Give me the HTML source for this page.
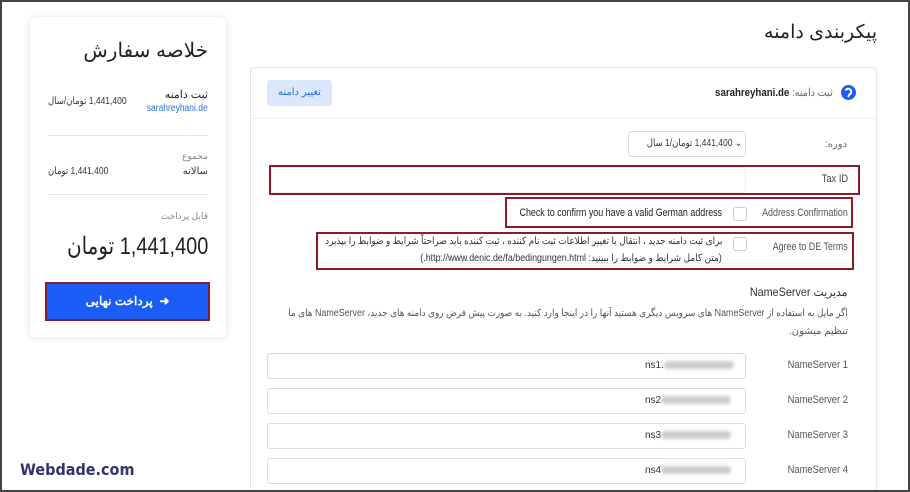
<!DOCTYPE html>
<html><head><meta charset="utf-8"><style>
*{margin:0;padding:0;box-sizing:border-box}
html,body{width:910px;height:492px;overflow:hidden}
body{background:#fff;position:relative;font-family:"Liberation Sans","Noto Sans CJK SC",sans-serif;color:#333}
.frame{position:absolute;left:0;top:0;width:910px;height:492px;border:2px solid #444;z-index:10;pointer-events:none}
.a{position:absolute;white-space:nowrap}
.R{transform-origin:right center}
.L{transform-origin:left center}
.r{direction:rtl}
.card{position:absolute;left:30px;top:17px;width:196px;height:320px;background:#fff;border-radius:4px;box-shadow:0 1px 8px rgba(0,0,0,.12)}
.hr{position:absolute;height:1px;background:#e8e8e8}
.panel{position:absolute;left:250px;top:67px;width:627px;height:440px;border:1px solid #e6e6e6;border-radius:4px;background:#fff}
.inp{position:absolute;background:#fff;border:1px solid #ddd;border-radius:3px}
.red{position:absolute;border:2px solid #8b1c2c}
.cb{position:absolute;width:14px;height:14px;border:1px solid #ccc;border-radius:3px;background:#fff}
.blur{display:inline-block;width:70px;height:8px;background:#ccc;border-radius:4px;filter:blur(1.5px);vertical-align:middle}
</style></head><body>
<div class="card"></div>
<div class="a r" style="right:702px;top:38px;font-size:20px;color:#222">خلاصه سفارش</div>
<div class="a r" style="right:702px;top:88px;font-size:11px;color:#222">ثبت دامنه</div>
<div class="a R" style="right:702px;top:103px;font-size:10px;color:#2a6fdb;transform:scaleX(.85)">sarahreyhani.de</div>
<div class="a r L" style="left:48px;top:96px;font-size:10px;color:#333;transform:scaleX(.85)">1,441,400 تومان/سال</div>
<div class="hr" style="left:48px;top:135px;width:160px"></div>
<div class="a r" style="right:702px;top:151px;font-size:9px;color:#888">مجموع</div>
<div class="a r" style="right:702px;top:166px;font-size:10px;color:#333">سالانه</div>
<div class="a r L" style="left:48px;top:166px;font-size:10px;color:#333;transform:scaleX(.85)">1,441,400 تومان</div>
<div class="hr" style="left:48px;top:194px;width:160px"></div>
<div class="a r" style="right:702px;top:211px;font-size:9px;color:#888">قابل پرداخت</div>
<div class="a r R" style="right:702px;top:232px;font-size:24px;color:#222;transform:scaleX(.83)">1,441,400 تومان</div>
<div class="a" style="left:45px;top:282px;width:165px;height:39px;background:#1a5cf5;border:2px solid #8b1c2c"></div>
<div class="a r" style="left:45px;top:294px;width:165px;text-align:center;font-size:12px;font-weight:bold;color:#fff">➜&nbsp; پرداخت نهایی</div>

<div class="a r" style="right:33px;top:21px;font-size:19px;color:#222">پیکربندی دامنه</div>
<div class="panel"></div>
<div class="hr" style="left:251px;top:118px;width:625px;background:#eee"></div>
<div class="a" style="left:267px;top:80px;width:65px;height:26px;background:#dbe7fb;border-radius:3px;font-size:10px;color:#2a6fdb;text-align:center;line-height:26px">تغییر دامنه</div>
<svg class="a" style="left:841px;top:85px" width="15" height="15" viewBox="0 0 15 15"><circle cx="7.5" cy="7.5" r="7.5" fill="#1a5cf5"/><path d="M4.5 5.5 A3 3 0 1 1 8.5 9.5 L7 12" fill="none" stroke="#fff" stroke-width="2"/></svg>
<div class="a r R" style="right:77px;top:86px;font-size:11px;color:#666;transform:scaleX(.88)">ثبت دامنه: <b style="color:#222">sarahreyhani.de</b></div>
<div class="a r" style="right:63px;top:139px;font-size:10px;color:#666">دوره:</div>
<div class="inp" style="left:628px;top:131px;width:118px;height:26px"></div>
<div class="a r R" style="right:168px;top:138px;font-size:10px;color:#333;transform:scaleX(.85)">⌄ 1,441,400 تومان/1 سال</div>
<div class="red" style="left:269px;top:165px;width:591px;height:30px"></div>
<div class="inp" style="left:271px;top:167px;width:475px;height:26px;border-color:#eee"></div>
<div class="a R" style="right:62px;top:173px;font-size:11px;color:#444;transform:scaleX(.85)">Tax ID</div>
<div class="red" style="left:505px;top:197px;width:348px;height:31px"></div>
<div class="a R" style="right:188px;top:207px;font-size:11px;color:#222;transform:scaleX(.81)">Check to confirm you have a valid German address</div>
<div class="cb" style="left:733px;top:207px"></div>
<div class="a R" style="right:62px;top:207px;font-size:11px;color:#555;transform:scaleX(.81)">Address Confirmation</div>
<div class="red" style="left:316px;top:232px;width:538px;height:38px"></div>
<div class="cb" style="left:733px;top:237px"></div>
<div class="a R" style="right:62px;top:241px;font-size:11px;color:#555;transform:scaleX(.81)">Agree to DE Terms</div>
<div class="a r R" style="right:188px;top:236px;font-size:10px;color:#333;transform:scaleX(.89)">برای ثبت دامنه جدید ، انتقال یا تغییر اطلاعات ثبت نام کننده ، ثبت کننده باید صراحتاً شرایط و ضوابط را بپذیرد</div>
<div class="a r R" style="right:188px;top:253px;font-size:10px;color:#333;transform:scaleX(.89)">(متن کامل شرایط و ضوابط را ببینید: http://www.denic.de/fa/bedingungen.html.)</div>
<div class="a r R" style="right:62px;top:285px;font-size:12px;color:#333;transform:scaleX(.9)">مدیریت NameServer</div>
<div class="a r R" style="right:62px;top:308px;font-size:10px;color:#555;transform:scaleX(.89)">اگر مایل به استفاده از NameServer های سرویس دیگری هستید آنها را در اینجا وارد کنید. به صورت پیش فرض روی دامنه های جدید، NameServer های ما</div>
<div class="a r" style="right:62px;top:326px;font-size:10px;color:#555">تنظیم میشون.</div>

<div class="inp" style="left:267px;top:353px;width:479px;height:26px"></div>
<div class="a" style="left:645px;top:360px;font-size:10px;color:#333">ns1.<span class="blur"></span></div>
<div class="a R" style="right:62px;top:359px;font-size:11px;color:#555;transform:scaleX(.85)">NameServer 1</div>
<div class="inp" style="left:267px;top:388px;width:479px;height:26px"></div>
<div class="a" style="left:645px;top:395px;font-size:10px;color:#333">ns2<span class="blur"></span></div>
<div class="a R" style="right:62px;top:394px;font-size:11px;color:#555;transform:scaleX(.85)">NameServer 2</div>
<div class="inp" style="left:267px;top:423px;width:479px;height:26px"></div>
<div class="a" style="left:645px;top:430px;font-size:10px;color:#333">ns3<span class="blur"></span></div>
<div class="a R" style="right:62px;top:429px;font-size:11px;color:#555;transform:scaleX(.85)">NameServer 3</div>
<div class="inp" style="left:267px;top:458px;width:479px;height:26px"></div>
<div class="a" style="left:645px;top:465px;font-size:10px;color:#333">ns4<span class="blur"></span></div>
<div class="a R" style="right:62px;top:464px;font-size:11px;color:#555;transform:scaleX(.85)">NameServer 4</div>

<div class="a L" style="left:20px;top:460px;font-size:16px;font-weight:bold;color:#33316e;font-family:'DejaVu Sans',sans-serif;transform:scaleX(.9)">Webdade.com</div>
<div class="frame"></div>
</body></html>
